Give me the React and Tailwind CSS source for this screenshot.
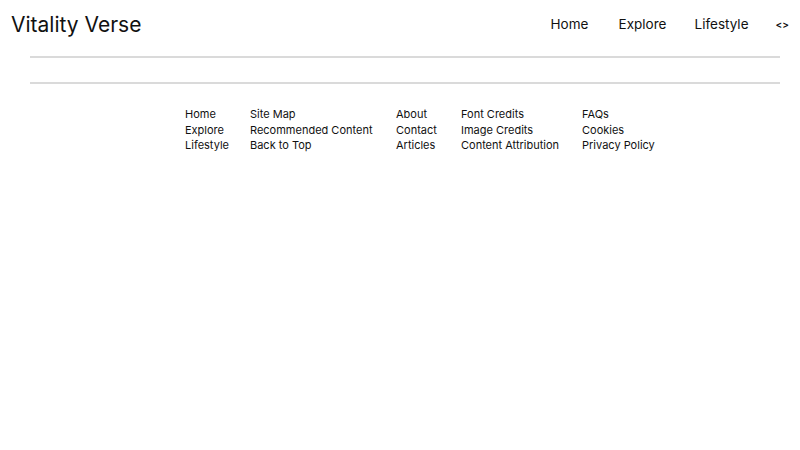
export default function App() {
  const font = { fontFamily: 'Inter, "Noto Sans", sans-serif' };
  const cols = [
    { w: "w-[65px]", items: ["Home", "Explore", "Lifestyle"] },
    { w: "w-[146px]", items: ["Site Map", "Recommended Content", "Back to Top"] },
    { w: "w-[65px]", items: ["About", "Contact", "Articles"] },
    { w: "w-[121px]", items: ["Font Credits", "Image Credits", "Content Attribution"] },
    { w: "w-[100px]", items: ["FAQs", "Cookies", "Privacy Policy"] },
  ];
  return (
    <div className="w-[800px] h-[450px] bg-white text-[#111]" style={font}>
      <header className="flex items-center justify-between pl-[11px] pr-[11px] h-[48px]">
        <div className="text-[21px] font-normal leading-none">Vitality Verse</div>
        <nav className="flex items-center text-[13.5px] leading-none pt-[2px]">
          <span className="w-[68px]">Home</span>
          <span className="w-[76px]">Explore</span>
          <span className="w-[81px]">Lifestyle</span>
          <span className="text-[10px] font-semibold -mt-[2px]">&lt;&gt;</span>
        </nav>
      </header>
      <div className="ml-[30px] mr-[20px] mt-[8px] h-[2px] bg-[#dadada]" />
      <div className="ml-[30px] mr-[20px] mt-[24px] h-[2px] bg-[#dadada]" />
      <footer className="flex pl-[185px] pt-[23px] text-[11px] leading-[15.5px]">
        {cols.map((c, i) => (
          <ul key={i} className={`${c.w} flex flex-col`}>
            {c.items.map((t) => (
              <li key={t}>{t}</li>
            ))}
          </ul>
        ))}
      </footer>
    </div>
  );
}
